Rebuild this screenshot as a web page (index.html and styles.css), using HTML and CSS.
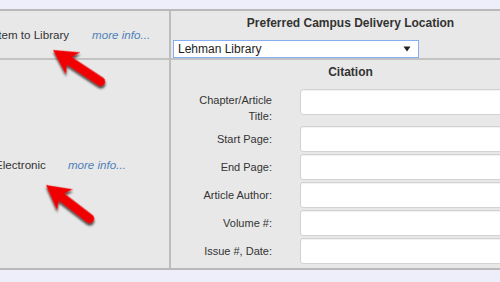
FILE: index.html
```html
<!DOCTYPE html>
<html>
<head>
<meta charset="utf-8">
<link rel="stylesheet" href="styles.css">
</head>
<body>
<div class="band"></div>
<div class="table">
  <div class="cell left row1">
    <div class="option"><span class="opt-label">Item to Library</span><a class="more">more info...</a></div>
  </div>
  <div class="cell right row1">
    <div class="head">Preferred Campus Delivery Location</div>
    <div class="select"><span>Lehman Library</span><svg class="caret" width="8" height="6" viewBox="0 0 8 6"><path d="M0.5 0.5 H7.5 L4 5.5 Z" fill="#222"/></svg></div>
  </div>
  <div class="cell left row2">
    <div class="option"><span class="opt-label">Electronic</span><a class="more more-2">more info...</a></div>
  </div>
  <div class="cell right row2">
    <div class="head head-cit">Citation</div>
    <div class="form">
      <label class="lbl lbl-tall">Chapter/Article Title:</label><div class="input input-top"></div>
      <label class="lbl">Start Page:</label><div class="input"></div>
      <label class="lbl">End Page:</label><div class="input"></div>
      <label class="lbl">Article Author:</label><div class="input"></div>
      <label class="lbl">Volume #:</label><div class="input"></div>
      <label class="lbl">Issue #, Date:</label><div class="input"></div>
    </div>
  </div>
</div>
<svg class="arrows" width="500" height="282" viewBox="0 0 500 282">
  <defs>
    <filter id="sh" x="-30%" y="-30%" width="160%" height="160%">
      <feDropShadow dx="1.5" dy="2" stdDeviation="1.2" flood-color="#000" flood-opacity="0.75"/>
    </filter>
  </defs>
  <path filter="url(#sh)" fill="#f00000" transform="translate(53 50) rotate(33.4)" d="M0 0 L24 -13 L19.5 -4.6 L57 -4.6 A4.6 4.6 0 0 1 57 4.6 L19.5 4.6 L24 13 Z"/>
  <path filter="url(#sh)" fill="#f00000" transform="translate(46 185) rotate(37.5)" d="M0 0 L24 -13 L19.5 -4.6 L55 -4.6 A4.6 4.6 0 0 1 55 4.6 L19.5 4.6 L24 13 Z"/>
</svg>
</body>
</html>
```
FILE: styles.css
```css
html, body {
  margin: 0;
  padding: 0;
}
body {
  background: #eeeefb;
  width: 500px;
  height: 282px;
  overflow: hidden;
  position: relative;
  font-family: "Liberation Sans", Arial, sans-serif;
  color: #333;
}
.band {
  height: 9px;
}
.table {
  width: 530px;
  display: grid;
  grid-template-columns: 171px 359px;
  grid-template-rows: 49px 208px;
  background: #e8e8e8;
  border-top: 2px solid #b9b9b9;
  border-bottom: 2px solid #b9b9b9;
}
.cell {
  min-width: 0;
}
.left {
  border-right: 2px solid #bdbdbd;
  display: flex;
  align-items: center;
  overflow: hidden;
}
.row1 {
  border-bottom: 2px solid #c3c3c3;
}
.option {
  margin-left: -5px;
  font-size: 11.6px;
  white-space: nowrap;
  color: #333;
}
.more {
  margin-left: 23px;
  font-style: italic;
  color: #4f7fb8;
}
.more-2 {
  margin-left: 22px;
}
.right {
  overflow: hidden;
}
.head {
  text-align: center;
  font-weight: bold;
  font-size: 12px;
  line-height: 14px;
  padding-top: 5px;
  color: #333;
}
.select {
  margin: 10px 0 0 2px;
  height: 16px;
  border: 1px solid #86aef0;
  background: #fff;
  display: flex;
  align-items: center;
  justify-content: space-between;
  font-size: 12px;
  padding: 0 7px 0 4px;
  box-sizing: content-box;
  width: 233px;
  color: #222;
}
.caret {
  display: block;
}
.head-cit {
  padding-top: 5px;
}
.form {
  margin: 10px 0 0 19px;
  display: grid;
  grid-template-columns: 82px 220px;
  column-gap: 28px;
  row-gap: 2px;
  align-items: center;
}
.lbl {
  text-align: right;
  font-size: 11px;
  line-height: 16px;
  color: #333;
}
.lbl-tall {
  padding-top: 3px;
}
.input {
  height: 24px;
  background: #fff;
  border: 1px solid #d2d2d2;
  border-radius: 3px;
  box-shadow: inset 0 1px 1px rgba(0,0,0,0.06);
}
.input-top {
  align-self: start;
}
.arrows {
  position: absolute;
  left: 0;
  top: 0;
  pointer-events: none;
}
```
